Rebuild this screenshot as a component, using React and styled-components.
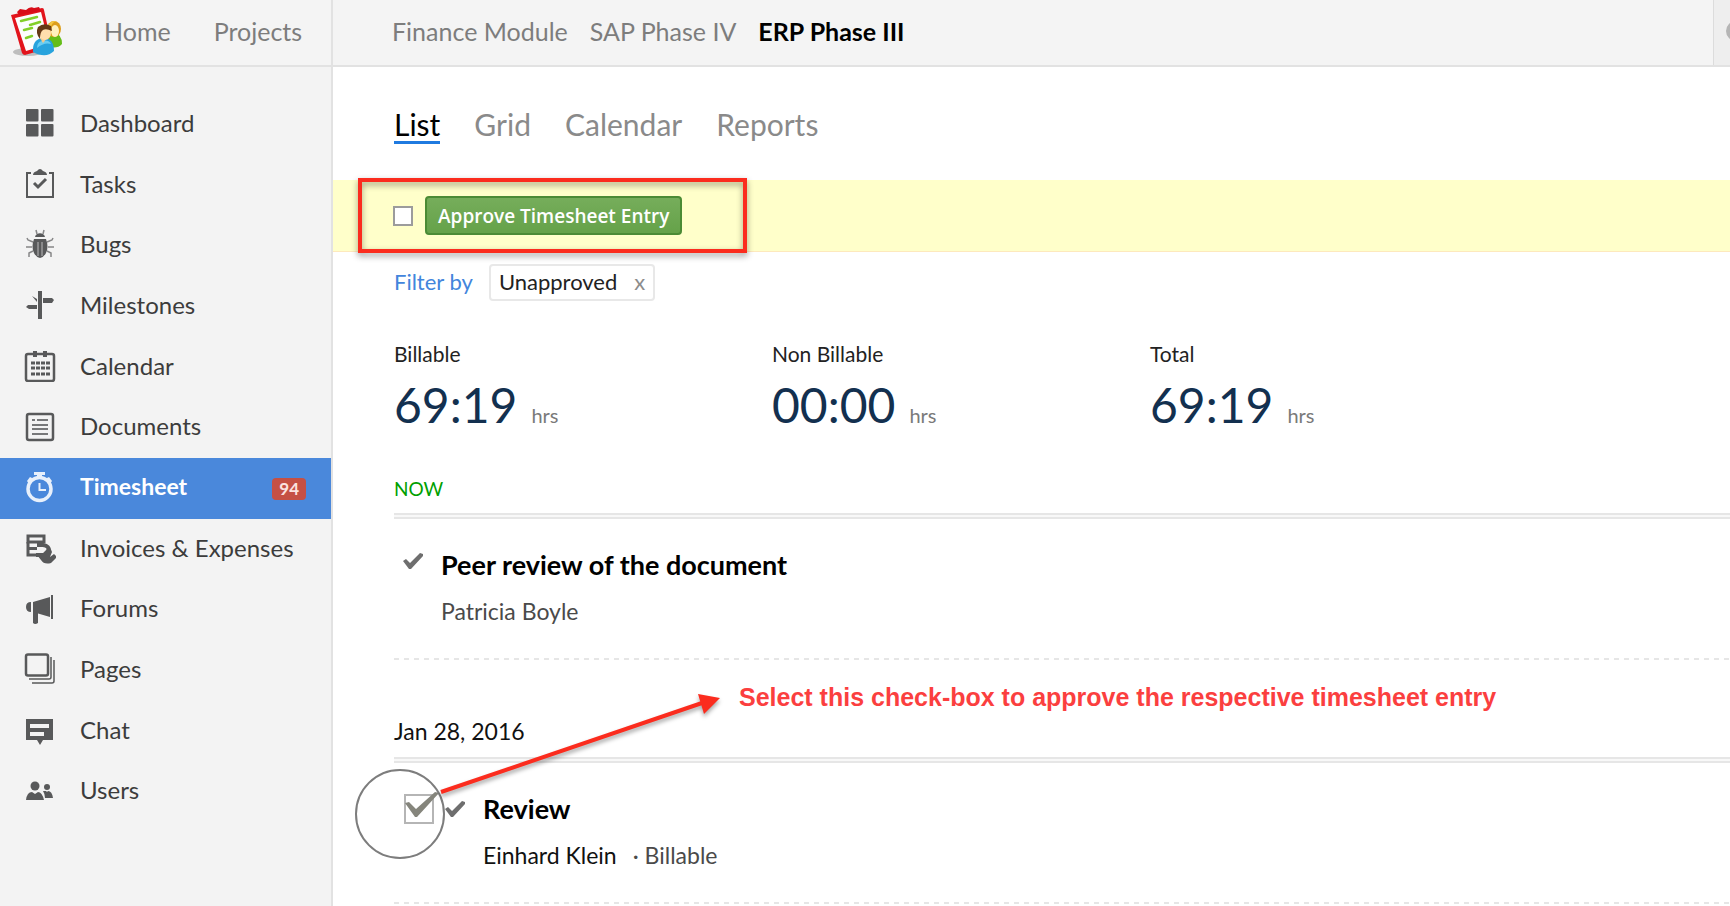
import React, { useState } from 'react';
import styled, { createGlobalStyle, css } from 'styled-components';

const GlobalStyle = createGlobalStyle`
  * {
    box-sizing: border-box;
  }
  body {
    margin: 0;
    background: #fff;
    color: #000;
    font-family: Lato, "Open Sans", sans-serif;
    font-size: 23px;
  }
  a {
    color: inherit;
    text-decoration: none;
  }
`;

const Page = styled.div`
  min-height: 100vh;
  display: flex;
  flex-direction: column;
  overflow: hidden;
`;

const Header = styled.header`
  display: flex;
  height: 67px;
  background: #f4f4f4;
  border-bottom: 2px solid #e2e2e2;
  color: #7d7d7d;
  font-size: 25px;
  line-height: 62px;
  white-space: nowrap;
`;

const HeaderMain = styled.div`
  display: flex;
  flex: 0 0 333px;
  border-right: 2px solid #e2e2e2;
  padding-left: 8px;
`;

const LogoLink = styled.a`
  display: block;
  width: 96px;
  padding-top: 4px;
  svg {
    display: block;
  }
`;

const MainLinks = styled.nav`
  display: flex;
  gap: 43px;
`;

const ProjectTabs = styled.nav`
  display: flex;
  flex: 1;
  gap: 22px;
  padding-left: 59px;
`;

const ProjectTab = styled.a`
  ${props => props.$active && css`
    color: #000;
    font-weight: 700;
  `}
`;

const HeaderEnd = styled.button`
  flex: 0 0 17px;
  display: flex;
  align-items: center;
  padding: 0 0 4px 12px;
  border: none;
  border-left: 1px solid #dcdcdc;
  background: #eee;
  overflow: hidden;
  svg {
    flex: none;
  }
`;

const Body = styled.div`
  flex: 1;
  display: flex;
`;

const Sidebar = styled.aside`
  flex: 0 0 333px;
  background: #f3f3f3;
  border-right: 2px solid #e2e2e2;
  padding-top: 27px;
`;

const NavList = styled.nav`
  display: flex;
  flex-direction: column;
  height: 728px;
`;

const NavItem = styled.a`
  flex: 1;
  display: flex;
  align-items: center;
  padding: 0 25px 2px 24px;
  color: ${props => (props.$active ? '#fff' : '#3c3c3c')};
  background: ${props => (props.$active ? '#4a88db' : 'transparent')};
  font-size: ${props => (props.$active ? 23 : 24)}px;
  font-weight: ${props => (props.$active ? 700 : 400)};
  svg {
    flex: none;
    margin-right: 24px;
    color: ${props => (props.$active ? '#e8f0fb' : '#58595a')};
  }
`;

const NavLabel = styled.span`
  padding-bottom: 2px;
`;

const Badge = styled.span`
  margin: 3px 0 0 auto;
  padding: 0 7px;
  border-radius: 4px;
  background: #c55044;
  color: #fbe3e0;
  font-size: 17px;
  font-weight: 700;
  line-height: 22px;
`;

const Content = styled.main`
  flex: 1;
  min-width: 0;
`;

const ViewTabs = styled.nav`
  display: flex;
  gap: 34px;
  padding: 40px 0 36px 61px;
  font-size: 30px;
  line-height: 34px;
  color: #8a8a8a;
`;

const ViewTab = styled.a`
  border-bottom: 3px solid ${props => (props.$active ? '#1f7ae0' : 'transparent')};
  ${props => props.$active && 'color: #000;'}
`;

const ApproveBar = styled.div`
  position: relative;
  display: flex;
  align-items: center;
  gap: 12px;
  height: 72px;
  padding-left: 60px;
  background: #ffffca;
  border-bottom: 1px solid #fde9bd;
`;

const Checkbox = styled.input`
  appearance: none;
  flex: none;
  width: ${props => (props.$large ? 30 : 20)}px;
  height: ${props => (props.$large ? 30 : 20)}px;
  margin: 0;
  border: 2px solid ${props => (props.$large ? '#b5b5b5' : '#9c9c9c')};
  background: #fff;
`;

const ApproveButton = styled.button`
  height: 39px;
  padding: 1px 11px 0;
  border: 2px solid #4b8b35;
  border-radius: 4px;
  background: linear-gradient(#76ad5b, #65a249);
  color: #fff;
  font-family: "Open Sans", "Noto Sans", sans-serif;
  font-size: 19px;
  font-weight: 600;
  white-space: nowrap;
`;

const Highlight = styled.div`
  position: absolute;
  left: 25px;
  top: -2px;
  width: 389px;
  height: 75px;
  border: 4px solid #fb2c1e;
  filter: drop-shadow(0 3px 3px rgba(0, 0, 0, 0.4));
  pointer-events: none;
`;

const FilterRow = styled.div`
  display: flex;
  align-items: center;
  gap: 16px;
  padding: 12px 0 0 61px;
  font-size: 22px;
  color: #4385dc;
`;

const FilterLink = styled.a`
  padding-bottom: 3px;
`;

const Chip = styled.span`
  display: flex;
  align-items: center;
  gap: 17px;
  height: 37px;
  padding: 0 8px 3px;
  border: 2px solid #e8e8e8;
  border-radius: 4px;
  color: #222;
`;

const ChipClose = styled.button`
  padding: 0;
  border: none;
  background: none;
  color: #8c8c8c;
  font: inherit;
`;

const Totals = styled.div`
  display: grid;
  grid-template-columns: repeat(3, minmax(0, 378px));
  padding: 40px 0 0 61px;
`;

const TotalLabel = styled.div`
  font-size: 21px;
  line-height: 25px;
  color: #222;
`;

const TotalValue = styled.div`
  display: flex;
  align-items: baseline;
  gap: 14px;
  margin-top: 11px;
  color: #13304f;
  font-size: 48px;
  line-height: 56px;
  small {
    color: #7a7a7a;
    font-size: 20px;
    line-height: 24px;
  }
`;

const Group = styled.section`
  position: relative;
  margin-left: 61px;
  padding-top: ${props => (props.$today ? 43 : 57)}px;
`;

const GroupTitle = styled.h2`
  margin: 0;
  padding-bottom: 12px;
  color: ${props => (props.$today ? '#00a000' : '#111')};
  font-size: ${props => (props.$today ? 19 : 23)}px;
  font-weight: 400;
  line-height: ${props => (props.$today ? 25 : 28)}px;
`;

const GroupRule = styled.div`
  height: 6px;
  border: solid #e6e6e6;
  border-width: 2px 0;
  background: #f8f8f8;
`;

const Entry = styled.article`
  display: flex;
  padding: 30px 0 35px 9px;
  background: repeating-linear-gradient(90deg, #e6e6e6 0 5px, transparent 5px 10px) left bottom / 100% 2px no-repeat;
`;

const EntryMarks = styled.div`
  display: flex;
  gap: 11px;
  height: ${props => (props.$selectable ? 32 : 24)}px;
  align-items: center;
  margin-right: 18px;
`;

const EntryTitle = styled.h3`
  margin: 0 0 16px;
  font-size: 27px;
  font-weight: 700;
  line-height: 32px;
`;

const EntryMeta = styled.p`
  display: flex;
  gap: 16px;
  margin: 0;
  color: #4a4a4a;
  font-size: 23px;
  line-height: 28px;
  span:first-child {
    color: ${props => (props.$strong ? '#111' : '#4a4a4a')};
  }
`;

const CheckLabel = styled.label`
  position: relative;
  display: flex;
  margin-left: 1px;
  svg {
    position: absolute;
    left: 1px;
    top: -3px;
    display: ${props => (props.$on ? 'block' : 'none')};
    pointer-events: none;
  }
`;

const Arrow = styled.svg`
  position: absolute;
  left: -44px;
  top: 20px;
  pointer-events: none;
`;

const Callout = styled.p`
  position: absolute;
  left: 345px;
  top: 23px;
  margin: 0;
  color: #fb3f3f;
  font-family: "Liberation Sans", Arial, sans-serif;
  font-size: 25px;
  font-weight: 700;
  line-height: 28px;
  white-space: nowrap;
`;

const Icon = ({ children, color = 'currentColor' }) => (
  <svg width="32" height="32" viewBox="0 0 32 32" fill={color} aria-hidden="true">
    {children}
  </svg>
);

const stroke = { fill: 'none', stroke: 'currentColor', strokeWidth: 2 };

const icons = {
  dashboard: (
    <Icon>
      <rect x="2" y="2" width="12.500" height="12.500" rx="1" />
      <rect x="17" y="2" width="12.500" height="12.500" rx="1" />
      <rect x="2" y="17" width="12.500" height="12.500" rx="1" />
      <rect x="17" y="17" width="12.500" height="12.500" rx="1" />
    </Icon>
  ),
  tasks: (
    <Icon>
      <path {...stroke} d="M7 5H3v24h26V5h-4" />
      <path d="M9 7q0-3 4-4 3-4 6 0 4 1 4 4z" />
      <path {...stroke} strokeWidth="3" d="m10 15 4 4 8-8" />
    </Icon>
  ),
  bugs: (
    <Icon>
      <path {...stroke} strokeWidth="1.500" opacity=".7" d="M13 5 12 1M19 5l1-4M9 13 4 11 3 9M8 18H2M9 22l-4 2v4M23 13l5-2 1-2M24 18h6M23 22l4 2v4" />
      <path d="M11 8c1-5 9-5 10 0zM10 10h12q3 8 0 14-2 4-6 5-4-1-6-5-3-6 0-14" />
      <path d="M14 13v14M18 13v14" stroke="#bbb" strokeWidth="1" />
    </Icon>
  ),
  milestones: (
    <Icon>
      <path d="M14 2h4v28h-4zM19 9h9l2 2-2 3h-9zM13 16v4H5l-3-2 2-2zM8 7l5 3v3z" />
    </Icon>
  ),
  calendar: (
    <Icon>
      <rect {...stroke} strokeWidth="2.500" x="2" y="4" width="28" height="27" rx="2" />
      <path d="M9 1h4v6H9zM19 1h4v6h-4z" />
      <path fill="none" stroke="currentColor" strokeWidth="3" strokeDasharray="4 1" d="M7 13h19M7 18h19M7 24h19" />
    </Icon>
  ),
  documents: (
    <Icon>
      <rect {...stroke} strokeWidth="2.500" x="3" y="3" width="26" height="26" rx="2" />
      <path {...stroke} d="M8 9h3M13 9h11M8 14h16M8 18h16M8 23h16" opacity=".8" />
    </Icon>
  ),
  timesheet: (
    <Icon>
      <circle cx="15.500" cy="18" r="11.500" fill="none" stroke="currentColor" strokeWidth="3.500" />
      <path d="M10 1h11v3h-3v3h-5V4h-3zM3 10l3-4 4 2-5 5zM28 10l-3-4-4 2 5 5z" />
      <path {...stroke} d="M15.500 12v7H22" />
    </Icon>
  ),
  invoices: (
    <Icon>
      <rect {...stroke} strokeWidth="3" x="4" y="4" width="16" height="6" />
      <path {...stroke} strokeWidth="3" d="M4 10v13h9M4 16.500h9" />
      <path {...stroke} strokeWidth="4" d="M13 13h6q7 1 5 6l-4 4h-8" />
      <path d="M13 23h8l5-8 2 5-2 5 4-3 3 3-6 6q-7 2-10-3z" />
    </Icon>
  ),
  forums: (
    <Icon>
      <path d="M9 9 26 4v20L9 19zM7 9v10q-5 0-5-5t5-5M27 2h2v24h-2zM9 19h5v11q-3 2-5 0z" />
    </Icon>
  ),
  pages: (
    <Icon>
      <rect {...stroke} strokeWidth="2.500" x="2" y="1.500" width="22" height="21" rx="2" />
      <path {...stroke} strokeWidth="1.500" d="M27 4v20q0 2-2 2H5M30 7v21q0 2-2 2H8" />
    </Icon>
  ),
  chat: (
    <Icon>
      <path fillRule="evenodd" d="M2 5h27v21H19l-3 5-3-5H2zM6 10v4h19v-4zM6 18v4h14v-4z" />
    </Icon>
  ),
  users: (
    <Icon>
      <circle cx="11" cy="11" r="4.500" />
      <circle cx="23" cy="12" r="3" />
      <path d="M2 25q1-8 6-8l3 2 3-2q4 0 6 8zM19 16h3l1 1 1-1q4 0 5 7h-8q0-4-2-7" />
    </Icon>
  ),
};

const Logo = () => (
  <svg width="58" height="56" viewBox="0 0 58 56" aria-hidden="true">
    <ellipse cx="20" cy="48" rx="15" ry="4" fill="#000" opacity=".22" />
    <path d="M3 11 34 4q2 0 2 2l8 36-3 2-24 7q-2 0-3-2z" fill="#e2141c" />
    <path d="m7 14 26-6 8 32-23 7z" fill="#fdfdfd" />
    <path d="m9 8 3-3 6 1q4-4 8-2l5-1 2 4-22 4z" fill="#d80d18" />
    <path d="m13 17 16-4M22 21l10-3M16 26l8-2M18 34l6-2" stroke="#82cf28" strokeWidth="2.500" strokeLinecap="round" />
    <path d="M41 43q-3-12 5-14 8 1 8 11-4 5-13 3" fill="#64bd18" />
    <ellipse cx="46" cy="25" rx="7" ry="8" fill="#dd9e1c" />
    <ellipse cx="47" cy="27" rx="4" ry="6" fill="#fff0be" />
    <path d="M40 24q1-8 8-7-4 1-6 8z" fill="#f5c942" />
    <path d="M25 48q-1-13 10-14 11 0 11 13-8 8-21 1" fill="#28a3dd" />
    <path d="M29 44q0-6 5-7 7-2 9 3-7-2-14 4" fill="#69cdf3" />
    <path d="m32 34 3 5 4-5z" fill="#f4c989" />
    <ellipse cx="37" cy="29" rx="6" ry="7" fill="#ffdfad" />
    <path d="M32 35q-5-6-2-12 6-5 13-1l1 5q-6-3-9-1-3 2-3 9" fill="#653916" />
  </svg>
);

const Tick = () => (
  <svg width="20" height="16" viewBox="0 0 20 16" aria-hidden="true">
    <path d="m0 8 3-2 4 4L17 0l3 1v2L8 16H6z" fill="#6e6e6e" />
  </svg>
);

const LargeTick = () => (
  <svg width="34" height="28" viewBox="0 0 34 28" aria-hidden="true">
    <path d="m0 12 4-1 7 7L30 1l4 1-22 24h-2z" fill="#85857c" />
  </svg>
);

const navItems = [
  { icon: 'dashboard', label: 'Dashboard' },
  { icon: 'tasks', label: 'Tasks' },
  { icon: 'bugs', label: 'Bugs' },
  { icon: 'milestones', label: 'Milestones' },
  { icon: 'calendar', label: 'Calendar' },
  { icon: 'documents', label: 'Documents' },
  { icon: 'timesheet', label: 'Timesheet', count: 94 },
  { icon: 'invoices', label: 'Invoices & Expenses' },
  { icon: 'forums', label: 'Forums' },
  { icon: 'pages', label: 'Pages' },
  { icon: 'chat', label: 'Chat' },
  { icon: 'users', label: 'Users' },
];

const totals = [
  { label: 'Billable', value: '69:19' },
  { label: 'Non Billable', value: '00:00' },
  { label: 'Total', value: '69:19' },
];

const App = () => {
  const [approved, setApproved] = useState(true);

  return (
    <Page>
      <GlobalStyle />
      <Header>
        <HeaderMain>
          <LogoLink href="#home" aria-label="Projects home"><Logo /></LogoLink>
          <MainLinks>
            <a href="#home">Home</a>
            <a href="#projects">Projects</a>
          </MainLinks>
        </HeaderMain>
        <ProjectTabs>
          <ProjectTab href="#finance">Finance Module</ProjectTab>
          <ProjectTab href="#sap">SAP Phase IV</ProjectTab>
          <ProjectTab href="#erp" $active>ERP Phase III</ProjectTab>
        </ProjectTabs>
        <HeaderEnd aria-label="Search">
          <svg width="20" height="20" viewBox="0 0 20 20">
            <circle cx="10" cy="10" r="8" fill="none" stroke="#b5b5b5" strokeWidth="4" />
          </svg>
        </HeaderEnd>
      </Header>

      <Body>
        <Sidebar>
          <NavList>
            {navItems.map(item => (
              <NavItem key={item.icon} href={`#${item.icon}`} $active={item.icon === 'timesheet'}>
                {icons[item.icon]}
                <NavLabel>{item.label}</NavLabel>
                {item.count && <Badge>{item.count}</Badge>}
              </NavItem>
            ))}
          </NavList>
        </Sidebar>

        <Content>
          <ViewTabs>
            <ViewTab href="#list" $active>List</ViewTab>
            <ViewTab href="#grid">Grid</ViewTab>
            <ViewTab href="#calendar-view">Calendar</ViewTab>
            <ViewTab href="#reports">Reports</ViewTab>
          </ViewTabs>

          <ApproveBar>
            <Checkbox type="checkbox" aria-label="Select all entries" />
            <ApproveButton>Approve Timesheet Entry</ApproveButton>
            <Highlight />
          </ApproveBar>

          <FilterRow>
            <FilterLink href="#filter">Filter by</FilterLink>
            <Chip>
              Unapproved
              <ChipClose aria-label="Remove filter">x</ChipClose>
            </Chip>
          </FilterRow>

          <Totals>
            {totals.map(total => (
              <div key={total.label}>
                <TotalLabel>{total.label}</TotalLabel>
                <TotalValue>{total.value}<small>hrs</small></TotalValue>
              </div>
            ))}
          </Totals>

          <Group $today>
            <GroupTitle $today>NOW</GroupTitle>
            <GroupRule />
            <Entry>
              <EntryMarks><Tick /></EntryMarks>
              <div>
                <EntryTitle>Peer review of the document</EntryTitle>
                <EntryMeta><span>Patricia Boyle</span></EntryMeta>
              </div>
            </Entry>
          </Group>

          <Group>
            <GroupTitle>Jan 28, 2016</GroupTitle>
            <GroupRule />
            <Entry>
              <EntryMarks $selectable>
                <CheckLabel $on={approved}>
                  <Checkbox
                    $large
                    type="checkbox"
                    aria-label="Approve Review"
                    checked={approved}
                    onChange={e => setApproved(e.target.checked)}
                  />
                  <LargeTick />
                </CheckLabel>
                <Tick />
              </EntryMarks>
              <div>
                <EntryTitle>Review</EntryTitle>
                <EntryMeta $strong>
                  <span>Einhard Klein</span>
                  <span>· Billable</span>
                </EntryMeta>
              </div>
            </Entry>
            <Arrow width="390" height="190" viewBox="0 0 390 190" aria-hidden="true">
              <circle cx="50" cy="134" r="44" fill="none" stroke="#7d7d7d" strokeWidth="2" />
              <g fill="#fb2c1e" filter="drop-shadow(0 3px 2px rgba(0, 0, 0, 0.35))">
                <path d="M91 112 352 23" stroke="#fb2c1e" strokeWidth="4" />
                <path d="m370 18-22-4 6 20z" />
              </g>
            </Arrow>
            <Callout>Select this check-box to approve the respective timesheet entry</Callout>
          </Group>
        </Content>
      </Body>
    </Page>
  );
};

export default App;
